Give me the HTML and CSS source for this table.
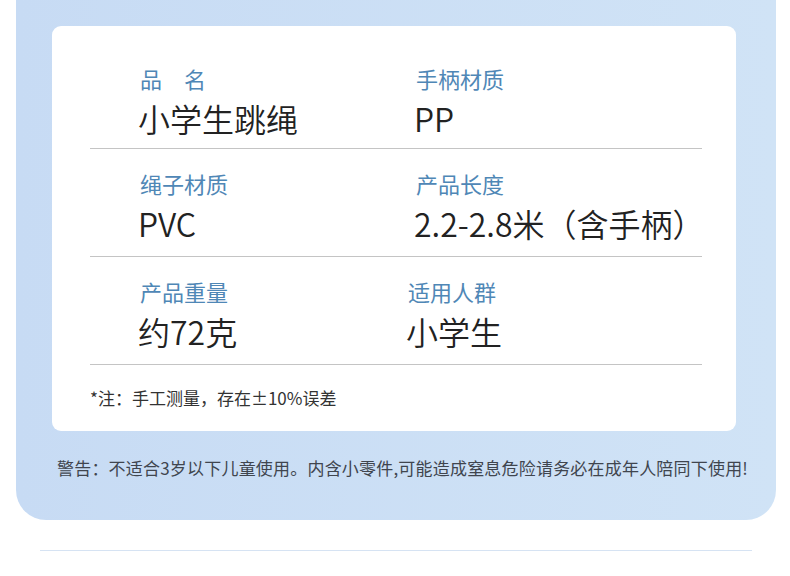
FILE: index.html
```html
<!DOCTYPE html>
<html lang="zh-CN">
<head>
<meta charset="utf-8">
<link rel="stylesheet" href="styles.css">
</head>
<body>
<div class="panel">
  <div class="card">
    <div class="row row-first">
      <div class="cell">
        <div class="label">品　名</div>
        <div class="value">小学生跳绳</div>
      </div>
      <div class="cell">
        <div class="label">手柄材质</div>
        <div class="value">PP</div>
      </div>
    </div>
    <div class="row">
      <div class="cell">
        <div class="label">绳子材质</div>
        <div class="value">PVC</div>
      </div>
      <div class="cell">
        <div class="label">产品长度</div>
        <div class="value">2.2-2.8米（含手柄）</div>
      </div>
    </div>
    <div class="row">
      <div class="cell">
        <div class="label">产品重量</div>
        <div class="value">约72克</div>
      </div>
      <div class="cell cell-shift">
        <div class="label">适用人群</div>
        <div class="value">小学生</div>
      </div>
    </div>
    <div class="note">*注：手工测量，存在±10%误差</div>
  </div>
  <div class="warning">警告：不适合3岁以下儿童使用。内含小零件,可能造成窒息危险请务必在成年人陪同下使用!</div>
</div>
<div class="bottom-line"></div>
</body>
</html>
```
FILE: styles.css
```css
html, body {
  margin: 0;
  padding: 0;
  background: #ffffff;
}
body {
  font-family: "Noto Sans CJK SC", "Noto Sans", sans-serif;
  width: 790px;
  height: 576px;
  overflow: hidden;
}
.panel {
  margin-left: 16px;
  width: 760px;
  box-sizing: border-box;
  padding: 26px 40px 40px 36px;
  background: linear-gradient(to right, #c7dbf4, #d0e3f6);
  border-radius: 0 0 30px 30px;
}
.card {
  background: #ffffff;
  border-radius: 9px;
  padding: 0 34px 22px 38px;
}
.row {
  display: grid;
  grid-template-columns: 276px 1fr;
  padding: 20px 0 13px 48px;
  border-bottom: 1px solid #c4c4c4;
}
.row-first {
  padding-top: 38px;
  padding-bottom: 10px;
}
.label {
  font-size: 22px;
  line-height: 28px;
  color: #4f87b6;
  padding-left: 2px;
  margin-bottom: 6px;
  white-space: nowrap;
}
.value {
  font-size: 32px;
  font-weight: 350;
  line-height: 40px;
  color: #222222;
  white-space: nowrap;
}
.cell-shift {
  margin-left: -8px;
}
.note {
  font-size: 17px;
  line-height: 22px;
  color: #333333;
  padding-top: 22px;
}
.warning {
  margin-top: 25px;
  margin-left: 5px;
  font-size: 17px;
  line-height: 24px;
  letter-spacing: 0.2px;
  color: #40454e;
  white-space: nowrap;
}
.bottom-line {
  margin: 30px 0 0 40px;
  width: 712px;
  height: 1px;
  background: #d6e3f3;
}
```
